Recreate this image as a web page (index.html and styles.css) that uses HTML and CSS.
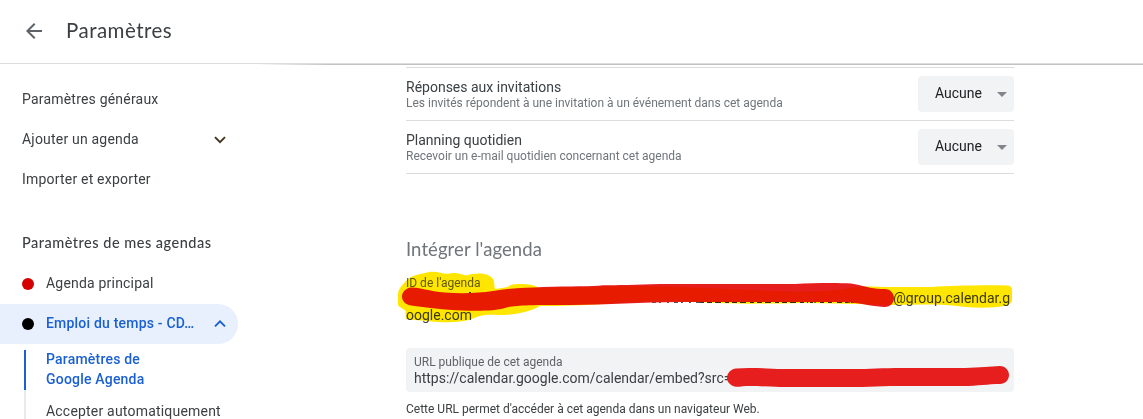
FILE: index.html
```html
<!DOCTYPE html>
<html lang="fr">
<head>
<meta charset="utf-8">
<title>Paramètres</title>
<link rel="stylesheet" href="styles.css">
</head>
<body>
<div class="app">
  <header class="topbar">
    <svg class="back" width="24" height="24" viewBox="0 0 24 24"><path d="M20 11H7.83l5.59-5.59L12 4l-8 8 8 8 1.41-1.41L7.83 13H20z" fill="#5f6368"/></svg>
    <h1 class="title">Paramètres</h1>
  </header>
  <div class="content">
    <nav class="sidebar">
      <a class="item general">Paramètres généraux</a>
      <a class="item add"><span class="label">Ajouter un agenda</span>
        <svg class="chevron" width="12" height="8" viewBox="0 0 12 8"><path d="M1 1.2 6 6.2 11 1.2" fill="none" stroke="#41331c" stroke-width="1.9"/></svg></a>
      <a class="item import">Importer et exporter</a>
      <h2 class="group">Paramètres de mes agendas</h2>
      <a class="item"><i class="dot red"></i><span class="main-cal">Agenda principal</span></a>
      <a class="item active"><i class="dot black"></i><span class="label">Emploi du temps - CD…</span>
        <svg class="chevron" width="12" height="8" viewBox="0 0 12 8"><path d="M1 6.4 6 1.4 11 6.4" fill="none" stroke="#1a5fd0" stroke-width="1.9"/></svg></a>
      <div class="sub">
        <a class="subitem current"><span>Paramètres de<br>Google Agenda</span></a>
        <a class="subitem accept">Accepter automatiquement</a>
      </div>
    </nav>
    <main class="panel">
      <section class="row">
        <div><div class="name n1">Réponses aux invitations</div><div class="desc d1">Les invités répondent à une invitation à un événement dans cet agenda</div></div>
        <div class="select"><span>Aucune</span><i class="caret"></i></div>
      </section>
      <section class="row">
        <div><div class="name n2">Planning quotidien</div><div class="desc d2">Recevoir un e-mail quotidien concernant cet agenda</div></div>
        <div class="select"><span>Aucune</span><i class="caret"></i></div>
      </section>
      <h2 class="heading">Intégrer l'agenda</h2>
      <div class="calendar-id">
        <div class="field-label idl">ID de l'agenda</div>
        <div class="id-value id-end">@group.calendar.g</div>
        <div class="id-value id-rest">oogle.com</div>
      </div>
      <div class="url-box">
        <div class="field-label url-label">URL publique de cet agenda</div>
        <div class="url">https://calendar.google.com/calendar/embed?src=</div>
      </div>
      <p class="note">Cette URL permet d'accéder à cet agenda dans un navigateur Web.</p>
    </main>
  </div>
  <svg class="ink" width="1143" height="419" viewBox="0 0 1143 419">
    <path d="M652 302.3H700" stroke="#555" stroke-width="1.2" stroke-dasharray="4 3 2 6 2 5"/>
    <path d="M700 302.4H808" stroke="#333" stroke-width="1.4" stroke-dasharray="4 3 5 3 6 4"/>
    <path d="M810 302.3h3M815 298v5M820 302.3h4M828 302.3h4M837 302.3h4M845 302.3h3M851 302.3h3M841.500 300v3M849 299v4M856 299v4" fill="none" stroke="#333" stroke-width="1.3"/>
    <path d="M470 293.5v-1.5" stroke="#333" stroke-width="2"/>
    <path d="M411 287.5C418 287 428 291 445 292.500C462 294 480 293 493 291C508 288 526 288 543 287C570 286 592 287 603 285.300C625 285.500 640 284 670 284H795C813 283 836 282.500 851 283.500C862 285 871 289 881 289H885C890 289 894 293 894 298S890 307 885 307C875 307 861 303 846 302H770C730 302 710 302.200 680 302C640 302 610 305 570 305C530 305 515 305 505 308C495 311 480 311 462 310.500C445 310 425 307.500 411 305.500C405 304.500 402 301 402 296.500S406 288 411 287.500Z" fill="#e61e1e"/>
    <path d="M736 368.500C752 367 770 369 782 369H865C890 367.500 930 368.300 965 368C980 367.500 990 366.400 1000 366C1005 366 1009 370 1009 375S1005 384 1000 384C988 384 978 386 963 386H890C880 386 872 387 862 387H780C765 386.500 750 385.500 741 386.500C734 388 727 384 727 378C727 373 731 369 736 368.500Z" fill="#e61e1e"/>
  </svg>
  <svg class="marker" width="1143" height="419" viewBox="0 0 1143 419">
    <path d="M406 281C411 275 421 274 429 272C438 270.500 443 275 450 273.500C457 272 462 275 466 275.500C477 272 489 273 493 279C495 283 494 286 495 289Q502 288 508 287C511 283 525 284 532 285Q536 286 539 288C570 287 610 286 650 286Q710 288 755 290Q800 293 840 290Q858 285 886 287H932C951 286 973 285 1008 285.500Q1012 286 1012 290V301Q1011 304 1005 306Q988 309 965 307C940 303 912 305 885 305Q850 303.500 800 303C765 304 720 304 702 302Q650 300 603 304Q570 306 540 306C532 311 517 315 499 315C485 314 480 315 469 320C451 324 436 322 406 319Q405 312 406 311L400 307Q397 306 398 299C397 291 400 287 406 281Z"/>
  </svg>
</div>
</body>
</html>
```
FILE: styles.css
```css
* { box-sizing: border-box; }
body { margin: 0; background: #fff; font-family: Roboto, "Liberation Sans", sans-serif; color: #3c4043; }
.app { position: relative; width: 1143px; height: 419px; overflow: hidden; isolation: isolate; background: #fff; }
.topbar { height: 65px; display: flex; align-items: center; padding: 0 0 3px 22px; gap: 20px;
  background: linear-gradient(#dadce0, #dadce0) 0 63px / 100% 1px no-repeat,
    linear-gradient(90deg, transparent 255px, #c2c2c2 330px) 0 64px / 100% 1px no-repeat; }
.title { margin: 0; padding-bottom: 2px; font: 400 20.5px/28px Lato, sans-serif; letter-spacing: .48px; white-space: nowrap; }
.content { display: flex; height: 354px; }
.sidebar { width: 406px; padding-top: 14px; flex: none; }
.item { display: flex; align-items: center; height: 40px; width: 238px; padding-left: 22px; font-size: 14px; letter-spacing: .2px; white-space: nowrap; }
.label { width: 192px; }
.chevron { margin-top: 1px; }
.group { margin: 34px 0 11px 22px; font: 500 14.5px/20px Lato, sans-serif; letter-spacing: .5px; }
.dot { width: 12px; height: 12px; border-radius: 50%; margin-right: 12px; flex: none; }
.red { background: #d50000; }
.black { background: #000; }
.active { background: #e8f0fe; border-radius: 0 20px 20px 0; color: #1a60d2; font-weight: 500; }
.main-cal, .active .label { padding-bottom: 2px; }
.active .label { width: 168px; }
.active .chevron { margin-top: 0; }
.sub { padding: 6px 0 0 24px; }
.subitem { display: block; border-left: 2px solid #e8eaed; padding-left: 20px; font-size: 14px; line-height: 20px; letter-spacing: .2px; }
.current { height: 40px; border-color: #1a60d2; color: #1a60d2; font-weight: 500; }
.current span { display: block; margin-top: -1px; }
.sub { display: flex; flex-direction: column; }
.accept { padding-top: 11px; }
.panel { width: 608px; padding-top: 2px; }
.row { height: 53px; border-top: 1px solid #dadce0; display: flex; justify-content: space-between; padding-top: 8px; }
.row + .row { height: 54px; border-bottom: 1px solid #dadce0; }
.name { font-size: 14px; line-height: 20px; margin-top: 1px; }
.desc { font-size: 12px; line-height: 16px; margin-top: -2px; color: #70757a; }
.name, .desc, .field-label, .note, .url { white-space: nowrap; }
.select { width: 96px; height: 36px; border-radius: 4px; background: #f1f3f4; display: flex; align-items: center; padding: 0 7px 2px 17px; justify-content: space-between; font-size: 14px; color: #202124; }
.caret { border: 5px solid transparent; border-top-color: #80868b; border-bottom: 0; margin-top: 2px; }
.heading { margin: 63px 0 0; font: 400 18.5px/24px Lato, sans-serif; color: #70757a; letter-spacing: .08px; }
.calendar-id { margin-top: 14px; height: 73px; }
.field-label { font-size: 12px; line-height: 16px; color: #5f6368; }
.id-value { font-size: 14px; line-height: 17px; }
.id-end { text-align: right; padding-right: 4px; margin-top: -1px; }
.url-box { height: 44px; background: #f1f3f4; border-radius: 4px; padding: 6px 8px; }
.url { font-size: 14px; line-height: 17px; }
.note { margin: 9px 0 0; font-size: 12px; line-height: 16px; }
.ink, .marker { position: absolute; left: 0; top: 0; }
.marker { mix-blend-mode: multiply; fill: #ffe600; }
```
